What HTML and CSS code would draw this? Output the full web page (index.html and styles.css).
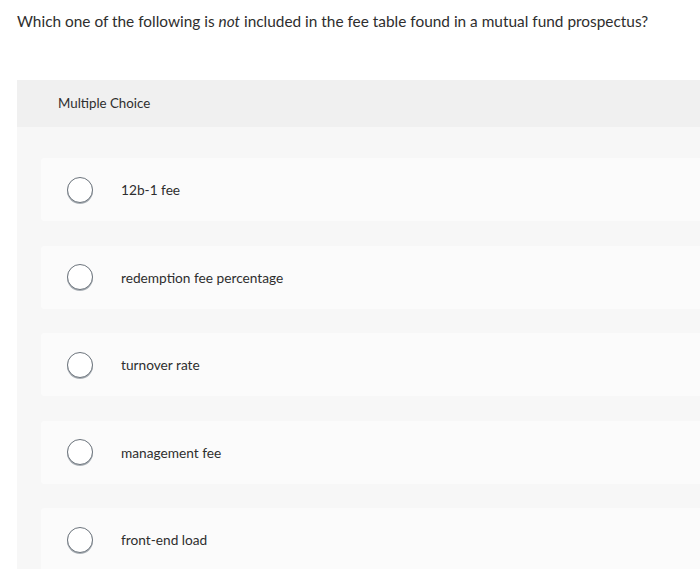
FILE: index.html
```html
<!DOCTYPE html>
<html>
<head>
<meta charset="utf-8">
<link rel="stylesheet" href="styles.css">
</head>
<body>
<p class="question">Which one of the following is <em>not</em> included in the fee table found in a mutual fund prospectus?</p>
<div class="panel">
  <div class="panel-head">Multiple Choice</div>
  <div class="options">
    <div class="option"><span class="radio"></span><span class="label">12b-1 fee</span></div>
    <div class="option"><span class="radio"></span><span class="label">redemption fee percentage</span></div>
    <div class="option"><span class="radio"></span><span class="label">turnover rate</span></div>
    <div class="option"><span class="radio"></span><span class="label">management fee</span></div>
    <div class="option"><span class="radio"></span><span class="label">front-end load</span></div>
  </div>
</div>
</body>
</html>
```
FILE: styles.css
```css
html, body {
  margin: 0;
  padding: 0;
  background: #ffffff;
  overflow: hidden;
}
body {
  font-family: Lato, "Open Sans", sans-serif;
  color: #2e2e2e;
  padding-left: 17px;
}
.question {
  margin: 0;
  padding-top: 11px;
  font-size: 15.4px;
  line-height: 20px;
  height: 69px;
}
.panel {
  background: #f7f7f7;
}
.panel-head {
  background: #f0f0f0;
  height: 47px;
  box-sizing: border-box;
  padding-left: 41px;
  padding-top: 15px;
  font-size: 13.3px;
  line-height: 17px;
}
.options {
  display: flex;
  flex-direction: column;
  gap: 24.5px;
  padding: 31px 0 0 24px;
}
.option {
  background: #fbfbfb;
  height: 63px;
  display: flex;
  align-items: center;
  padding-left: 26px;
  border-radius: 3px 0 0 3px;
}
.radio {
  width: 24px;
  height: 24px;
  border: 1.5px solid #6c747c;
  border-radius: 50%;
  background: #ffffff;
  box-shadow: 0 1px 0 #aab0b6;
  flex: none;
}
.label {
  margin-left: 28px;
  font-size: 13.7px;
}
```
